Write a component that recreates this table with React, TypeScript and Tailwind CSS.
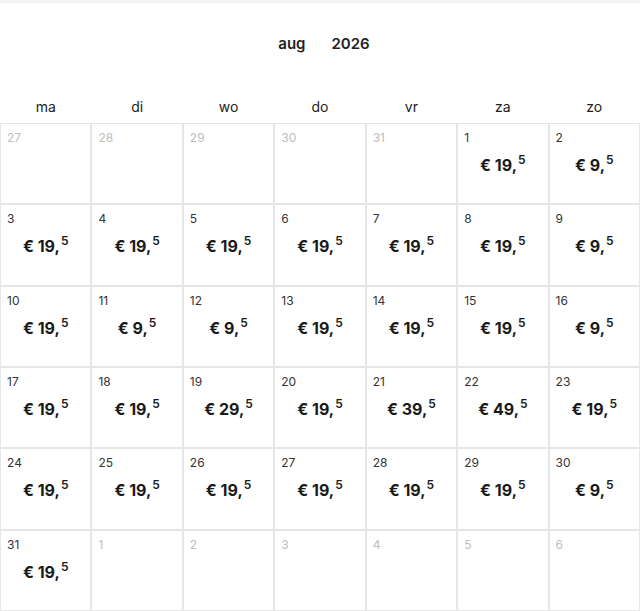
const weekdays = ['ma', 'di', 'wo', 'do', 'vr', 'za', 'zo'];

type Day = { n: number; inMonth: boolean; price?: string };

const prices: Record<number, string> = {
  1: '19', 2: '9', 3: '19', 4: '19', 5: '19', 6: '19', 7: '19', 8: '19', 9: '9',
  10: '19', 11: '9', 12: '9', 13: '19', 14: '19', 15: '19', 16: '9',
  17: '19', 18: '19', 19: '29', 20: '19', 21: '39', 22: '49', 23: '19',
  24: '19', 25: '19', 26: '19', 27: '19', 28: '19', 29: '19', 30: '9', 31: '19',
};

const days: Day[] = [
  ...[27, 28, 29, 30, 31].map((n) => ({ n, inMonth: false })),
  ...Array.from({ length: 31 }, (_, i) => ({ n: i + 1, inMonth: true, price: prices[i + 1] })),
  ...[1, 2, 3, 4, 5, 6].map((n) => ({ n, inMonth: false })),
];

function Cell({ day }: { day: Day }) {
  return (
    <div className="border border-[#e6e6e6] bg-white px-[6px] pt-[6px] flex flex-col">
      <span className={`text-[12px] leading-[16px] ${day.inMonth ? 'text-[#333]' : 'text-[#bdbdbd]'}`}>
        {day.n}
      </span>
      {day.price && (
        <div className="mt-[7px] text-center text-[#1a1a1a] font-bold">
          <span className="text-[16px] leading-[20px]">€ {day.price},</span>
          <sup className="ml-[1px] text-[12px] font-semibold relative -top-[7px]">5</sup>
        </div>
      )}
    </div>
  );
}

export default function App() {
  return (
    <div className="w-[640px] h-[611px] overflow-hidden bg-white flex flex-col font-['Inter','Liberation_Sans',sans-serif]">
      <div className="h-[3px] bg-[#f3f3f3]" />
      <div className="h-[82px] flex items-center justify-center gap-[26px] pl-[8px] text-[15px] font-semibold text-[#222]">
        <span>aug</span>
        <span>2026</span>
      </div>
      <div className="h-[38px] grid grid-cols-7 items-center pt-[4px] text-[14px] text-[#222]">
        {weekdays.map((w) => (
          <div key={w} className="text-center">{w}</div>
        ))}
      </div>
      <div className="flex-1 grid grid-cols-7 grid-rows-6">
        {days.map((d, i) => (
          <Cell key={i} day={d} />
        ))}
      </div>
    </div>
  );
}
